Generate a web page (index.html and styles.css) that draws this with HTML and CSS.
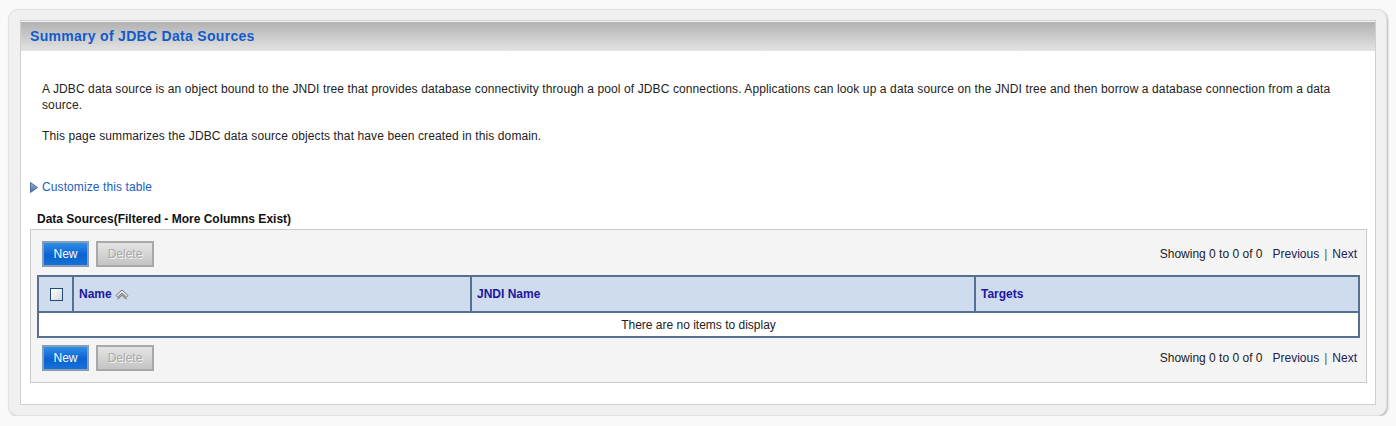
FILE: index.html
```html
<!DOCTYPE html>
<html>
<head>
<meta charset="utf-8">
<link rel="stylesheet" href="styles.css">
</head>
<body>
<div class="frame">
  <div class="panel">
    <div class="panel-head"><h1 class="panel-title">Summary of JDBC Data Sources</h1></div>
    <div class="content">
      <p class="intro">A JDBC data source is an object bound to the JNDI tree that provides database connectivity through a pool of JDBC connections. Applications can look up a data source on the JNDI tree and then borrow a database connection from a data source.</p>
      <p class="intro intro-last">This page summarizes the JDBC data source objects that have been created in this domain.</p>
      <div class="customize">
        <svg class="tri" width="8" height="11" viewBox="0 0 8 11"><defs><linearGradient id="tg" x1="0" y1="0" x2="0" y2="1"><stop offset="0" stop-color="#9fb6d6"/><stop offset="1" stop-color="#3a6aa8"/></linearGradient></defs><path d="M0.5 0.5 L7.5 5.5 L0.5 10.5 Z" fill="url(#tg)" stroke="#4b6f9c" stroke-width="1"/></svg>
        <span class="link">Customize this table</span>
      </div>
      <div class="table-title">Data Sources(Filtered - More Columns Exist)</div>
      <div class="tbox">
        <div class="toolbar">
          <div class="btns"><span class="btn btn-new">New</span><span class="btn btn-off">Delete</span></div>
          <div class="paging"><span class="count">Showing 0 to 0 of 0</span><span class="pnav">Previous</span><span class="sep">|</span><span class="pnav">Next</span></div>
        </div>
        <div class="grid">
          <div class="th th-check"><span class="check"></span></div>
          <div class="th">Name<svg class="sort" width="14" height="11" viewBox="0 0 14 11"><path d="M1 6.5 L7 1 L13 6.5 L11.5 8 L7 4 L2.5 8 Z" fill="#f2f2f2" stroke="#707070" stroke-width="1" stroke-linejoin="round"/><path d="M2.5 10 L7 6 L11.5 10" fill="none" stroke="#808080" stroke-width="1.2"/></svg></div>
          <div class="th">JNDI Name</div>
          <div class="th">Targets</div>
          <div class="td-empty">There are no items to display</div>
        </div>
        <div class="toolbar toolbar-bottom">
          <div class="btns"><span class="btn btn-new">New</span><span class="btn btn-off">Delete</span></div>
          <div class="paging"><span class="count">Showing 0 to 0 of 0</span><span class="pnav">Previous</span><span class="sep">|</span><span class="pnav">Next</span></div>
        </div>
      </div>
    </div>
  </div>
</div>
</body>
</html>
```
FILE: styles.css
```css
* { box-sizing: border-box; }
body {
  margin: 0;
  background: #f9f9f9;
  font-family: "Liberation Sans", Arial, sans-serif;
  font-size: 12px;
  color: #222;
}
.frame {
  margin: 9px 0 0 8px;
  width: 1379px;
  height: 407px;
  background: #f0f0f0;
  border: 1px solid #e2e2e2;
  border-radius: 10px;
  box-shadow: 1px 1px 2px #b8b8b8;
  padding: 10px 10px 10px 11px;
}
.panel {
  background: #fff;
  border: 1px solid #cfcfcf;
  height: 385px;
  display: flex;
  flex-direction: column;
}
.panel-head {
  height: 30px;
  border-top: 1px solid #f4f4f4;
  background: linear-gradient(#b2b2b2, #e3e3e3);
  padding-left: 9px;
}
.panel-title {
  margin: 0;
  font-size: 14px;
  font-weight: bold;
  line-height: 29px;
  letter-spacing: 0.3px;
  color: #105bcc;
}
.content {
  padding: 30px 8px 0 9px;
}
.intro {
  margin: 0 0 15px;
  padding: 0 20px 0 12px;
  line-height: 16px;
  letter-spacing: 0.11px;
}
.intro-last { margin-bottom: 0; }
.customize {
  margin-top: 35px;
  height: 16px;
  display: flex;
  align-items: center;
  gap: 4px;
}
.tri { display: block; }
.link { color: #1c5ec4; letter-spacing: 0.1px; }
.table-title {
  margin-top: 16px;
  line-height: 16px;
  padding-left: 7px;
  font-weight: bold;
  color: #111;
}
.tbox {
  margin-top: 2px;
  background: #f4f4f4;
  border: 1px solid #cbcbcb;
  padding: 11px 6px 11px 6px;
}
.toolbar {
  display: flex;
  justify-content: space-between;
  align-items: center;
  height: 26px;
  padding: 0 3px 0 5px;
  margin-bottom: 8px;
}
.toolbar-bottom { margin: 7px 0 0; }
.btns { display: flex; gap: 7px; }
.btn {
  display: flex;
  align-items: center;
  justify-content: center;
  height: 26px;
  border: 2px solid #9a9a9a;
  font-size: 12px;
}
.btn-new {
  width: 47px;
  color: #fff;
  border-color: #8a9cb4;
  background: linear-gradient(#2f8ee8, #0b62cf 55%, #1671d8);
}
.btn-off {
  width: 58px;
  color: #a9a9a9;
  text-shadow: 1px 1px 0 #f2f2f2;
  border-color: #a8a8a8;
  background: linear-gradient(#e4e4e4, #c4c4c4);
}
.paging { color: #222; display: flex; align-items: center; }
.count { margin-right: 10px; }
.pnav { color: #20205a; }
.sep { color: #555; margin: 0 5px; }
.grid {
  display: grid;
  grid-template-columns: 33px 396px 502px 1fr;
  gap: 2px;
  padding: 2px;
  background: #56708f;
}
.th {
  height: 34px;
  background: #cfdcee;
  display: flex;
  align-items: center;
  padding-left: 5px;
  font-weight: bold;
  color: #1c17a0;
}
.th-check { justify-content: center; padding-left: 2px; }
.check {
  width: 13px;
  height: 13px;
  border: 1px solid #1d4c7c;
  background: linear-gradient(135deg, #ffffff, #d6d6d6);
}
.sort { margin-left: 3px; display: block; }
.td-empty {
  grid-column: 1 / -1;
  height: 23px;
  background: #fff;
  display: flex;
  align-items: center;
  justify-content: center;
  color: #222;
}
```
